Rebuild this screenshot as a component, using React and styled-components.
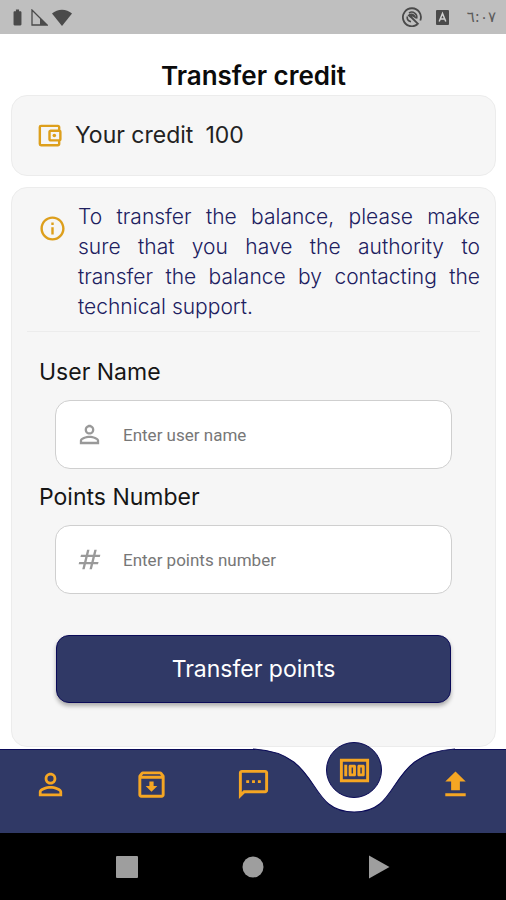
import { useState } from "react";
import styled, { createGlobalStyle } from "styled-components";
import {
  MdBatteryFull,
  MdInfoOutline,
  MdMoney,
  MdNumbers,
  MdOutlineAccountBalanceWallet,
  MdOutlineArchive,
  MdOutlineSms,
  MdPersonOutline,
  MdUpload,
} from "react-icons/md";

const GlobalStyle = createGlobalStyle`
  :root {
    --navy: #303966;
    --navyEdge: #0a0a58;
    --gold: #f5a623;
    --amber: #dd9f1c;
    --panel: #f6f6f6;
  }
  * {
    box-sizing: border-box;
  }
  body {
    margin: 0;
    background: #ffffff;
    font-family: Inter, "Open Sans", sans-serif;
  }
`;

const Screen = styled.div`
  min-height: 100vh;
  display: flex;
  flex-direction: column;
`;

const StatusBar = styled.header`
  height: 34px;
  padding: 0 10px 0 8px;
  display: flex;
  justify-content: space-between;
  align-items: center;
  background: #bfbfbf;
  color: #4a4a4a;
`;

const StatusGroup = styled.div`
  display: flex;
  align-items: center;
  gap: ${(props) => props.$gap}px;
`;

const Clock = styled.time`
  font-family: "DejaVu Sans", sans-serif;
  font-size: 15px;
  margin-left: 4px;
  color: #5c5c5c;
  direction: ltr;
  unicode-bidi: bidi-override;
`;

const Main = styled.main`
  flex: 1;
  display: flex;
  flex-direction: column;
  padding: 24px 10px 2px 11px;
`;

const Title = styled.h1`
  margin: 0 0 1px;
  font-size: 26px;
  line-height: 36px;
  font-weight: 600;
  text-align: center;
  color: #0b0b0b;
`;

const Card = styled.section`
  background: var(--panel);
  border: 1px solid #ececec;
  border-radius: 16px;
`;

const CreditCard = styled(Card)`
  display: flex;
  align-items: center;
  gap: 11px;
  padding: 25px 23px;
  margin-bottom: 11px;
  color: #222222;
  font-size: 23px;
  line-height: 29px;

  svg {
    color: var(--amber);
  }
`;

const Amount = styled.span`
  margin-left: 1px;
`;

const TransferCard = styled(Card)`
  flex: 1;
  padding: 14px 15px 42px;
`;

const Notice = styled.div`
  display: flex;
  gap: 11px;
  padding: 0 0 9px 11px;
  border-bottom: 1px solid #ececec;
  color: var(--amber);

  svg {
    flex-shrink: 0;
    margin-top: 12px;
  }
`;

const NoticeText = styled.p`
  margin: 0;
  font-size: 21px;
  line-height: 30px;
  font-weight: 300;
  text-align: justify;
  color: #20205f;
`;

const Form = styled.form`
  padding: 22px 12px 0;
`;

const Label = styled.label`
  display: block;
  margin-bottom: 10px;
  font-size: 23px;
  line-height: 36px;
  color: #161616;
`;

const Field = styled.div`
  display: flex;
  align-items: center;
  gap: 19px;
  height: 69px;
  margin: 0 16px 10px;
  padding: 0 19px;
  background: #ffffff;
  border: 1px solid #cfcfcf;
  border-radius: 15px;
  color: #999999;

  &:focus-within {
    border-color: var(--navy);
  }
`;

const Input = styled.input`
  flex: 1;
  min-width: 0;
  height: 100%;
  padding: 0;
  border: none;
  outline: none;
  background: transparent;
  font-family: Roboto, sans-serif;
  font-size: 17px;
  color: #222222;

  &::placeholder {
    color: #777777;
    opacity: 1;
  }
`;

const SubmitButton = styled.button`
  display: block;
  width: calc(100% - 34px);
  height: 68px;
  margin: 41px 17px 0;
  border: 1px solid var(--navyEdge);
  border-radius: 13px;
  background: var(--navy);
  box-shadow: 0 3px 4px rgba(0, 0, 0, 0.3);
  font-family: inherit;
  font-size: 23px;
  color: #ffffff;
  cursor: pointer;
`;

const TabBar = styled.nav`
  display: flex;
  height: 84px;
  background: var(--navy);
  border-top: 1px solid var(--navyEdge);
`;

const TabSlot = styled.div`
  flex: 1;
  position: relative;
  display: flex;
  justify-content: center;
`;

const Tab = styled.button`
  position: relative;
  width: 56px;
  height: 56px;
  margin-top: ${(props) => (props.$active ? "-8px" : "6px")};
  padding: 0;
  display: flex;
  justify-content: center;
  align-items: center;
  border: ${(props) => (props.$active ? "1px solid var(--navyEdge)" : "none")};
  border-radius: 50%;
  background: ${(props) => (props.$active ? "var(--navy)" : "transparent")};
  color: var(--gold);
  cursor: pointer;
`;

/* white dip under the raised tab, two slots wide */
const Notch = styled.svg`
  position: absolute;
  top: -2px;
  left: -50%;
  width: 200%;
  height: 65px;
  pointer-events: none;
`;

const SystemBar = styled.footer`
  display: flex;
  justify-content: space-between;
  align-items: center;
  height: 67px;
  padding: 0 23%;
  background: #000000;
`;

const SystemButton = styled.button`
  display: flex;
  padding: 0;
  border: none;
  background: none;
  color: #9e9e9e;
  cursor: pointer;
`;

const SignalIcon = () => (
  <svg width="17" height="17" viewBox="0 0 17 17" aria-hidden="true">
    <path d="M1 1v15h15z" fill="none" stroke="currentColor" strokeWidth="1.3" />
    <path d="M9 8.5V16h7.5z" fill="currentColor" />
  </svg>
);

const WifiIcon = () => (
  <svg width="20" height="17" viewBox="0 0 20 17" aria-hidden="true">
    <path d="M0 4.5C5.5-.6 14.5-.6 20 4.5L10 17z" fill="currentColor" />
  </svg>
);

const SyncIcon = () => (
  <svg width="20" height="20" viewBox="0 0 20 20" fill="none" aria-hidden="true">
    <path
      d="M15.5 17.3A9 9 0 1 1 18.3 13.5"
      stroke="currentColor"
      strokeWidth="1.8"
    />
    <path
      d="M9 14.8A5 5 0 0 1 5.2 9.5M7 6A5 5 0 0 1 14.6 11.5"
      stroke="currentColor"
      strokeWidth="1.6"
    />
    <path d="M5.5 8.5C8 5 13.5 6 14.5 12L10.5 9.5 8.5 11z" fill="currentColor" />
    <path d="M9 10l7.5 7.3" stroke="currentColor" strokeWidth="1.8" />
  </svg>
);

const KeyboardIcon = () => (
  <svg width="13" height="15" viewBox="0 0 13 15" aria-hidden="true">
    <rect width="13" height="15" rx="1" fill="currentColor" />
    <path
      d="M3.2 11.5L6.5 3.5 9.8 11.5M4.5 9h4"
      fill="none"
      stroke="#d0d0d0"
      strokeWidth="1.5"
    />
  </svg>
);

const tabs = [
  { name: "Profile", icon: MdPersonOutline },
  { name: "Archive", icon: MdOutlineArchive },
  { name: "Messages", icon: MdOutlineSms },
  { name: "Credit", icon: MdMoney },
  { name: "Upload", icon: MdUpload },
];

const fields = [
  {
    id: "username",
    label: "User Name",
    placeholder: "Enter user name",
    icon: MdPersonOutline,
  },
  {
    id: "points",
    label: "Points Number",
    placeholder: "Enter points number",
    icon: MdNumbers,
  },
];

const App = () => {
  const [active, setActive] = useState("Credit");

  return (
    <Screen>
      <GlobalStyle />
      <StatusBar>
        <StatusGroup $gap={4}>
          <MdBatteryFull size={19} />
          <SignalIcon />
          <WifiIcon />
        </StatusGroup>
        <StatusGroup $gap={14}>
          <SyncIcon />
          <KeyboardIcon />
          <Clock>٦:٠٧</Clock>
        </StatusGroup>
      </StatusBar>

      <Main>
        <Title>Transfer credit</Title>
        <CreditCard>
          <MdOutlineAccountBalanceWallet size={29} />
          <span>Your credit</span>
          <Amount>100</Amount>
        </CreditCard>

        <TransferCard>
          <Notice>
            <MdInfoOutline size={29} />
            <NoticeText>
              To transfer the balance, please make sure that you have the
              authority to transfer the balance by contacting the technical
              support.
            </NoticeText>
          </Notice>
          <Form onSubmit={(e) => e.preventDefault()}>
            {fields.map(({ id, label, placeholder, icon: Icon }) => (
              <div key={id}>
                <Label htmlFor={id}>{label}</Label>
                <Field>
                  <Icon size={29} />
                  <Input id={id} type="text" placeholder={placeholder} />
                </Field>
              </div>
            ))}
            <SubmitButton type="submit">Transfer points</SubmitButton>
          </Form>
        </TransferCard>
      </Main>

      <TabBar>
        {tabs.map(({ name, icon: Icon }) => (
          <TabSlot key={name}>
            {active === name && (
              <Notch viewBox="0 0 202 65" preserveAspectRatio="none" aria-hidden="true">
                <path d="M0 0V1C71 5 51 64 101 64S131 5 202 1V0z" fill="#ffffff" />
                <path
                  d="M0 1C71 5 51 64 101 64S131 5 202 1"
                  fill="none"
                  stroke="#0a0a58"
                />
              </Notch>
            )}
            <Tab
              type="button"
              aria-label={name}
              $active={active === name}
              onClick={() => setActive(name)}
            >
              <Icon size={35} />
            </Tab>
          </TabSlot>
        ))}
      </TabBar>

      <SystemBar>
        <SystemButton type="button" aria-label="Recent apps">
          <svg width="22" height="22" viewBox="0 0 22 22">
            <rect width="22" height="22" rx="1" fill="currentColor" />
          </svg>
        </SystemButton>
        <SystemButton type="button" aria-label="Home">
          <svg width="22" height="22" viewBox="0 0 22 22">
            <circle cx="11" cy="11" r="10.5" fill="currentColor" />
          </svg>
        </SystemButton>
        <SystemButton type="button" aria-label="Back">
          <svg width="22" height="24" viewBox="0 0 22 24">
            <path d="M1 0.5L21.5 12 1 23.5z" fill="currentColor" />
          </svg>
        </SystemButton>
      </SystemBar>
    </Screen>
  );
};

export default App;
